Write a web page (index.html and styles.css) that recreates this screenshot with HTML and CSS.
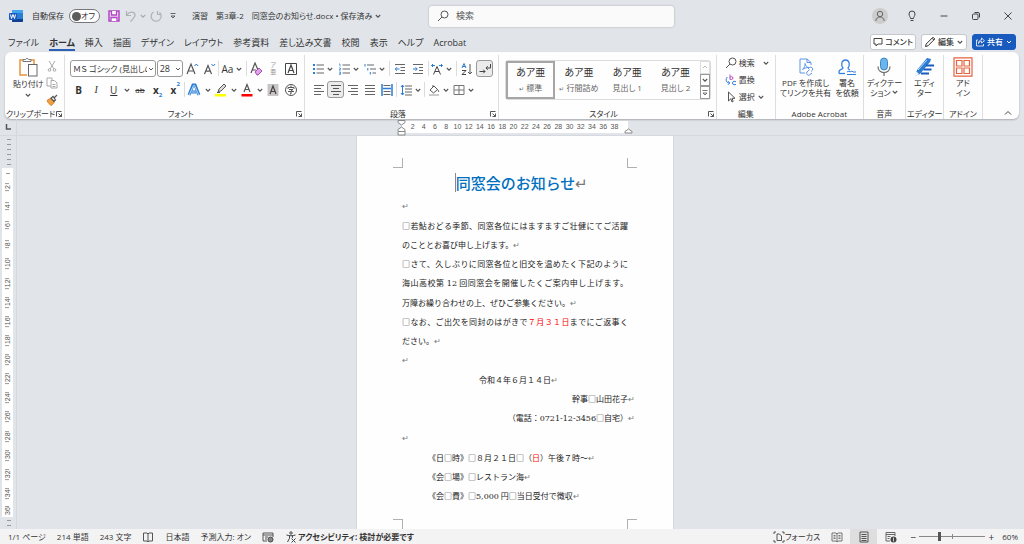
FILE: index.html
```html
<!DOCTYPE html>
<html lang="ja">
<head>
    <meta charset="UTF-8">
    <meta name="viewport" content="width=device-width, initial-scale=1.0">
    <title>演習 第3章-2 同窓会のお知らせ.docx</title>
    <link rel="stylesheet" href="styles.css">
</head>
<body>
    <!-- shared symbols -->
    <svg class="defs" width="0" height="0" aria-hidden="true">
        <symbol id="chev" viewBox="0 0 8 8"><path d="M1.8 3 4 5.2 6.200 3" fill="none" stroke="#555" stroke-width="1.100"/></symbol>
        <symbol id="launch" viewBox="0 0 8 8"><path d="M1.500 6.500v-5h5M3.500 3.500l3 3M6.500 3.500v3h-3" fill="none" stroke="#555"/></symbol>
        <symbol id="lens" viewBox="0 0 12 12"><g fill="none" stroke="#555"><circle cx="7.500" cy="4.500" r="3.500"/><path d="M5 7 1 11"/></g></symbol>
    </svg>

    <header class="titlebar">
        <div class="title-left">
            <svg class="ico app-icon" viewBox="0 0 14 14"><rect x="3" y="1" width="11" height="12" rx="1" fill="#2b7cd3"/><path d="M3 2a1 1 0 0 1 1-1h9a1 1 0 0 1 1 1v2H3z" fill="#41a5ee"/><path d="M3 10h11v2a1 1 0 0 1-1 1H4a1 1 0 0 1-1-1z" fill="#103f91"/><rect y="4" width="8" height="7" rx="1" fill="#185abd"/><path d="m1.500 5.500 1 4 1.500-4 1.500 4 1-4" fill="none" stroke="#fff"/></svg>
            <label class="autosave">自動保存
                <span class="switch"><input type="checkbox"><span class="switch-text">オフ</span></span>
            </label>
            <button class="tool" aria-label="上書き保存"><svg class="ico" viewBox="0 0 12 12"><path d="M1 1h10v10H1z" fill="#f3d9f5" stroke="#b146c2" stroke-width="1.500"/><path d="M3.500 1v4h5V1M3 11V7.500h6V11" fill="#fff" stroke="#b146c2" stroke-width="1.300"/></svg></button>
            <button class="tool" aria-label="元に戻す"><svg class="ico" viewBox="0 0 12 12"><path d="M1.500 1v4.500H6M1.800 5.200C4 1.500 9 1 10 4.500c.6 2.500-2 4-4.500 7" fill="none" stroke="#aeb1b6" stroke-width="1.200"/></svg></button>
            <svg class="chev faint"><use href="#chev"/></svg>
            <button class="tool" aria-label="やり直し"><svg class="ico" viewBox="0 0 12 12"><path d="M7.500 1v3.500H11M3.500 2A5 5 0 1 0 9.500 2.500" fill="none" stroke="#aeb1b6" stroke-width="1.200"/></svg></button>
            <button class="tool" aria-label="ツールバーの設定"><svg class="ico" viewBox="0 0 12 12"><path d="M3.500 3.500h5M4 6h4L6 8z" fill="none" stroke="#555" stroke-width=".9"/></svg></button>
            <span class="doc-name">演習　第3章-2　同窓会のお知らせ.docx • 保存済み</span>
            <svg class="chev"><use href="#chev"/></svg>
        </div>
        <label class="search">
            <svg class="ico"><use href="#lens"/></svg>
            <input type="search" placeholder="検索" aria-label="検索">
        </label>
        <div class="title-right">
            <button aria-label="アカウント"><svg class="avatar" viewBox="0 0 16 16"><circle cx="8" cy="8" r="8" fill="#cdcdcd"/><g fill="none" stroke="#666"><circle cx="8" cy="6" r="2.700"/><path d="M3.800 13c.4-5.400 8-5.400 8.400 0"/></g></svg></button>
            <button aria-label="ヒント"><svg class="ico" viewBox="0 0 12 12"><g fill="none" stroke="#444"><path d="M4.500 8.500C4.500 7 3 6 3 4a3 3 0 0 1 6 0c0 2-1.500 3-1.500 4.500zM4.500 10.500h3"/></g></svg></button>
            <button aria-label="最小化"><svg class="ico" viewBox="0 0 12 12"><path d="M2.500 6h7" stroke="#444"/></svg></button>
            <button aria-label="元のサイズに戻す"><svg class="ico" viewBox="0 0 12 12"><g fill="none" stroke="#444"><rect x="2.500" y="4" width="5.500" height="5.500" rx="1"/><path d="M4.500 2.500H8A1.500 1.500 0 0 1 9.500 4v3.500"/></g></svg></button>
            <button aria-label="閉じる"><svg class="ico" viewBox="0 0 12 12"><path d="m2.500 2.500 7 7m0-7-7 7" stroke="#444"/></svg></button>
        </div>
    </header>

    <nav class="tabs">
        <a href="#">ファイル</a>
        <a href="#" class="active">ホーム</a>
        <a href="#">挿入</a>
        <a href="#">描画</a>
        <a href="#">デザイン</a>
        <a href="#">レイアウト</a>
        <a href="#">参考資料</a>
        <a href="#">差し込み文書</a>
        <a href="#">校閲</a>
        <a href="#">表示</a>
        <a href="#">ヘルプ</a>
        <a href="#">Acrobat</a>
        <div class="tab-actions">
            <button class="action"><svg class="ico-s" viewBox="0 0 10 10"><path d="M1 1.500h8v5.500H5L3 9V7H1z" fill="none" stroke="#444"/></svg>コメント</button>
            <button class="action"><svg class="ico" viewBox="0 0 12 12"><path d="M1.500 10.500 2.200 8 9 1.200l1.800 1.800L4 9.800zM8 2.200 9.800 4" fill="none" stroke="#333"/></svg>編集<svg class="chev"><use href="#chev"/></svg></button>
            <button class="action share"><svg class="ico-s" viewBox="0 0 10 10"><path d="M3 3H1.500v6h7V7M3.500 6.500C3.500 4 5 3 6.500 3V1L9.500 3.800 6.500 6V4.500C5 4.500 4 5 3.500 6.500z" fill="none" stroke="#fff" stroke-width=".8"/></svg>共有<svg class="chev" viewBox="0 0 8 8"><path d="M2 3 4 5l2-2" fill="none" stroke="#fff"/></svg></button>
        </div>
    </nav>

    <section class="ribbon">
        <!-- clipboard -->
        <div class="group">
            <div class="group-body clipboard">
                <button class="big">
                    <svg class="ico-l" viewBox="0 0 20 20"><path d="M6 3H2v15h7" fill="none" stroke="#e8943a" stroke-width="1.500"/><path d="M12 3h4v4" fill="none" stroke="#e8943a" stroke-width="1.500"/><path d="M5 4.500V2.500h2.500a1.600 1.600 0 0 1 3 0H13v2z" fill="#fff" stroke="#777"/><rect x="10.500" y="7.500" width="8.500" height="11.500" fill="#fff" stroke="#666"/></svg>
                    <span>貼り付け</span>
                    <svg class="chev"><use href="#chev"/></svg>
                </button>
                <div class="stack">
                    <button class="tool" aria-label="切り取り"><svg class="ico" viewBox="0 0 12 12"><g fill="none" stroke="#aaa"><path d="M3 1l5 8M9 1 4 9"/><circle cx="3.500" cy="10" r="1.300"/><circle cx="8.500" cy="10" r="1.300"/></g></svg></button>
                    <button class="tool" aria-label="コピー"><svg class="ico" viewBox="0 0 12 12"><g fill="#fff" stroke="#aaa"><path d="M1 1h5v8H1z"/><path d="M5 3.500h3.500L11 6v5H5zM6.500 7.500h3M6.500 9.500h3"/></g></svg></button>
                    <button class="tool" aria-label="書式のコピー"><svg class="ico" viewBox="0 0 12 12"><path d="M1 6.500 5 4l3.500 4L5.500 11.500C4 11 2 9 1 6.500z" fill="#f0a040" stroke="#d9822b"/><path d="M5 4.200 7 2.500 9.500 6 8 7.500zM8 4l3-3" fill="#fff" stroke="#555" stroke-width="1.200"/></svg></button>
                </div>
            </div>
            <div class="group-label"><span>クリップボード</span><svg class="launch"><use href="#launch"/></svg></div>
        </div>

        <!-- font -->
        <div class="group">
            <div class="group-body rows">
                <div class="row spread">
                    <select class="combo font-name" aria-label="フォント"><option>ＭＳ ゴシック (見出しの</option></select>
                    <select class="combo font-size" aria-label="フォント サイズ"><option>28</option></select>
                    <button class="tool" aria-label="フォントの拡大"><svg class="ico-m" viewBox="0 0 14 14"><path d="m2 12 4-10 4 10M3.500 9h5" fill="none" stroke="#555" stroke-width="1.200"/><path d="m9.500 4 1.800-2 1.800 2" fill="none" stroke="#2b7cd3"/></svg></button>
                    <button class="tool" aria-label="フォントの縮小"><svg class="ico-m" viewBox="0 0 14 14"><path d="M2.500 12 6 3.500 9.500 12M4 9.200h4" fill="none" stroke="#555" stroke-width="1.200"/><path d="m9.500 2 1.800 2 1.800-2" fill="none" stroke="#2b7cd3"/></svg></button>
                    <i class="sep"></i>
                    <button class="tool split aa">Aa<svg class="chev"><use href="#chev"/></svg></button>
                    <i class="sep"></i>
                    <button class="tool" aria-label="書式のクリア"><svg class="ico-m" viewBox="0 0 14 14"><path d="M2 11 6 1l3 7M3.500 8H7" fill="none" stroke="#555" stroke-width="1.200"/><path d="m6 10 4-4 3 3-4 4H8z" fill="#d9a6e2" stroke="#b146c2"/></svg></button>
                    <button class="tool ruby" aria-label="ルビ"><span>ア</span><span>亜</span></button>
                    <button class="tool" aria-label="囲み線"><svg class="ico-m" viewBox="0 0 14 14"><path d="M1.500 1.500h11v11h-11z" fill="none" stroke="#444"/><path d="m4 11 3-8 3 8M5 8.500h4" fill="none" stroke="#444" stroke-width="1.200"/></svg></button>
                </div>
                <div class="row spread">
                    <button class="tool bold">B</button>
                    <button class="tool italic">I</button>
                    <button class="tool underline">U</button>
                    <svg class="chev"><use href="#chev"/></svg>
                    <button class="tool strike">ab</button>
                    <button class="tool bold" aria-label="下付き">x<sub>2</sub></button>
                    <button class="tool bold" aria-label="上付き">x<sup>2</sup></button>
                    <i class="sep"></i>
                    <button class="tool" aria-label="文字の効果"><svg class="ico-m" viewBox="0 0 14 14"><path d="M2 12 6 2h2l4 10M4.500 9h5" fill="none" stroke="#2b7cd3" stroke-width="3"/><path d="M2.200 12 6.500 2.500h1L11.800 12M4.500 9h5" fill="none" stroke="#b9dcf7" stroke-width="1"/></svg></button>
                    <svg class="chev"><use href="#chev"/></svg>
                    <button class="tool" aria-label="蛍光ペン"><svg class="ico-m" viewBox="0 0 14 14"><path d="m4 8.500 1-2.500 5-5 2 2-5 5zM3 9.500h3" fill="#ddd" stroke="#555"/><path d="M1 11h11v2.500H1z" fill="#ff0"/></svg></button>
                    <svg class="chev"><use href="#chev"/></svg>
                    <button class="tool" aria-label="フォントの色"><svg class="ico-m" viewBox="0 0 14 14"><path d="m4 9 3-7.500L10 9M5 6.500h4" fill="none" stroke="#555" stroke-width="1.200"/><path d="M1.500 11h11v2.500h-11z" fill="#f00"/></svg></button>
                    <svg class="chev"><use href="#chev"/></svg>
                    <button class="tool" aria-label="文字の網かけ"><svg class="ico-m" viewBox="0 0 14 14"><path d="M1.500 1h11v12h-11z" fill="#c8c6c4"/><path d="m4 11 3-8 3 8M5 8.500h4" fill="none" stroke="#444" stroke-width="1.200"/></svg></button>
                    <button class="tool" aria-label="囲い文字"><svg class="ico-m" viewBox="0 0 14 14"><g fill="none" stroke="#555"><circle cx="7" cy="7" r="5.500"/><path d="M7 2.500V4M4 6V4.500h6V6M5 6.500h4L7 8M4 8.500h6M7 8v3H6"/></g></svg></button>
                </div>
            </div>
            <div class="group-label"><span>フォント</span><svg class="launch"><use href="#launch"/></svg></div>
        </div>

        <!-- paragraph -->
        <div class="group">
            <div class="group-body rows">
                <div class="row spread">
                    <button class="tool split" aria-label="箇条書き"><svg class="ico" viewBox="0 0 12 12"><path d="M4.500 2H12M4.500 6H12M4.500 10H12" stroke="#666"/><path d="M1 2h2M1 6h2M1 10h2" stroke="#2b7cd3" stroke-width="2"/></svg><svg class="chev"><use href="#chev"/></svg></button>
                    <button class="tool split" aria-label="段落番号"><svg class="ico" viewBox="0 0 12 12"><path d="M4.500 2H12M4.500 6H12M4.500 10H12" stroke="#666"/><path d="M1 1h1v2.500M1 5h1.500v1L1 7h2M1 9h1.500v2.500H1M1 10.200h1.500" stroke="#2b7cd3" stroke-width=".7" fill="none"/></svg><svg class="chev"><use href="#chev"/></svg></button>
                    <button class="tool split" aria-label="アウトライン"><svg class="ico" viewBox="0 0 12 12"><path d="M3 2h7M6 6h6M8.500 10H12" stroke="#666"/><path d="M1 1v2.500M3.800 5v2.500M6.300 9v2.500" stroke="#2b7cd3"/></svg><svg class="chev"><use href="#chev"/></svg></button>
                    <i class="sep"></i>
                    <button class="tool" aria-label="インデントを減らす"><svg class="ico" viewBox="0 0 12 12"><path d="M1 1.500h10M6.500 4.500H11M6.500 7.500H11M1 10.500h10" stroke="#666"/><path d="M5.500 6h-4M3 4.200 1.200 6 3 7.800" stroke="#2b7cd3" fill="none"/></svg></button>
                    <button class="tool" aria-label="インデントを増やす"><svg class="ico" viewBox="0 0 12 12"><path d="M1 1.500h10M7 4.500h4M7 7.500h4M1 10.500h10" stroke="#666"/><path d="M1 6h4M3.500 4.200 5.300 6 3.500 7.800" stroke="#2b7cd3" fill="none"/></svg></button>
                    <i class="sep"></i>
                    <button class="tool split" aria-label="拡張書式"><svg class="ico" viewBox="0 0 12 12"><path d="m2.500 11.500 3.500-8 3.500 8M4 8.500h4" fill="none" stroke="#444"/><path d="M.5 2.500H4M2 1 .5 2.500 2 4M8 2.500h3.500M10 1l1.500 1.500L10 4" fill="none" stroke="#2b7cd3"/></svg><svg class="chev"><use href="#chev"/></svg></button>
                    <i class="sep"></i>
                    <button class="tool" aria-label="並べ替え"><svg class="ico" viewBox="0 0 12 12"><path d="m1 5 2-4.500L5 5M1.800 3.500h2.400" fill="none" stroke="#2b7cd3"/><path d="M1 7.500h4l-4 4h4" fill="none" stroke="#444"/><path d="M9 1v10M7 9l2 2 2-2" fill="none" stroke="#555"/></svg></button>
                    <button class="tool on" aria-label="編集記号の表示"><svg class="ico" viewBox="0 0 12 12"><path d="M11.500 1v4H7M8.700 3.200 7 5l1.700 1.800M.5 8.500H6M4.300 6.700 6 8.500 4.300 10.300" fill="none" stroke="#444"/></svg></button>
                </div>
                <div class="row">
                    <button class="tool" aria-label="左揃え"><svg class="ico" viewBox="0 0 12 12"><path d="M1 1.500h10M1 4.500h7M1 7.500h10M1 10.500h7" stroke="#666"/></svg></button>
                    <button class="tool on" aria-label="中央揃え"><svg class="ico" viewBox="0 0 12 12"><path d="M1 1.500h10M3 4.500h6M1 7.500h10M3 10.500h6" stroke="#555"/></svg></button>
                    <button class="tool" aria-label="右揃え"><svg class="ico" viewBox="0 0 12 12"><path d="M1 1.500h10M4 4.500h7M1 7.500h10M4 10.500h7" stroke="#666"/></svg></button>
                    <button class="tool" aria-label="両端揃え"><svg class="ico" viewBox="0 0 12 12"><path d="M1 1.500h10M1 4.500h10M1 7.500h10M1 10.500h10" stroke="#666"/></svg></button>
                    <button class="tool" aria-label="均等割り付け"><svg class="ico" viewBox="0 0 12 12"><path d="M1 0v12M11 0v12M2 4.500h8" stroke="#2b7cd3" stroke-width="1.500"/><path d="M2.500 1.500h7M2.500 7.500h7M2.500 10.500h7" stroke="#666"/></svg></button>
                    <i class="sep"></i>
                    <button class="tool split" aria-label="行間"><svg class="ico" viewBox="0 0 12 12"><path d="M5 2h7M5 5h7M5 8h7M5 11h7" stroke="#666"/><path d="M2.500 1v10M1 3l1.500-2L4 3M1 9l1.500 2L4 9" fill="none" stroke="#2b7cd3"/></svg><svg class="chev"><use href="#chev"/></svg></button>
                    <i class="sep"></i>
                    <button class="tool split" aria-label="塗りつぶし"><svg class="ico" viewBox="0 0 12 12"><path d="m2 6 4-4 3.500 3.500L5.500 9zM5 3V1M9.500 5.500c1 1 1.500 2 .8 2.500" fill="none" stroke="#555"/><path d="M1 10h10v2H1z" fill="#ccc"/></svg><svg class="chev"><use href="#chev"/></svg></button>
                    <button class="tool split" aria-label="罫線"><svg class="ico" viewBox="0 0 12 12"><path d="M1 1.500h10v9H1zM6 1.500v9M1 6h10" fill="none" stroke="#777"/></svg><svg class="chev"><use href="#chev"/></svg></button>
                </div>
            </div>
            <div class="group-label"><span>段落</span><svg class="launch"><use href="#launch"/></svg></div>
        </div>

        <!-- styles -->
        <div class="group">
            <div class="group-body gallery-wrap">
                <div class="gallery">
                    <button class="style-card selected"><b>あア亜</b><span><small>↵</small> 標準</span></button>
                    <button class="style-card"><b>あア亜</b><span><small>↵</small> 行間詰め</span></button>
                    <button class="style-card"><b>あア亜</b><span>見出し 1</span></button>
                    <button class="style-card"><b>あア亜</b><span>見出し 2</span></button>
                    <div class="gallery-nav">
                        <button aria-label="上へ" disabled><svg class="chev" viewBox="0 0 8 8"><path d="m2 5 2-2 2 2" fill="none" stroke="#bbb"/></svg></button>
                        <button aria-label="下へ"><svg class="chev"><use href="#chev"/></svg></button>
                        <button aria-label="その他"><svg class="chev" viewBox="0 0 8 8"><path d="M1.500 1.500h5M2 4h4L4 6z" fill="none" stroke="#555" stroke-width=".8"/></svg></button>
                    </div>
                </div>
            </div>
            <div class="group-label"><span>スタイル</span><svg class="launch"><use href="#launch"/></svg></div>
        </div>

        <!-- editing -->
        <div class="group">
            <div class="group-body editing">
                <button class="line"><svg class="ico"><use href="#lens"/></svg>検索<svg class="chev far"><use href="#chev"/></svg></button>
                <button class="line"><svg class="ico" viewBox="0 0 12 12"><path d="M5 .5v5M5 3.500c.5-1.200 3-1.200 3 .5S5.500 6 5 5" fill="none" stroke="#b146c2"/><path d="M2.500 3C0 5 1 9 4.500 9M3 7.200 4.800 9 3 10.800M11 7.800c-1-1-3.500-.8-3.500 1.200s2.500 2.200 3.500 1.200" fill="none" stroke="#2b7cd3"/></svg>置換</button>
                <button class="line"><svg class="ico" viewBox="0 0 12 12"><path d="M3.500 1v9l2.300-2.200L7 11l1.200-.6L7 7.300h3z" fill="none" stroke="#555"/></svg>選択<svg class="chev"><use href="#chev"/></svg></button>
            </div>
            <div class="group-label"><span>編集</span></div>
        </div>

        <!-- acrobat -->
        <div class="group">
            <div class="group-body bigs">
                <button class="big">
                    <svg class="ico-l" viewBox="0 0 20 20"><g fill="none" stroke="#5b95ea"><path d="M15 8V5.500L11 2H4v14h5M11 2v3.500h4M6.500 12.500c2-2 3-4 2.500-6 1 3 2 4 4 4-2.500 0-4.500.5-6.500 2z"/><path d="m11 15 2.500-2.500M12 12l1.500-1.500a2 2 0 0 1 2.800 2.800L15 14.500M12.500 13.500 11 15a2 2 0 0 0 2.800 2.800L16 16"/></g></svg>
                    <span>PDF を作成し<br>てリンクを共有</span>
                </button>
                <button class="big">
                    <svg class="ico-l" viewBox="0 0 20 20"><g fill="none" stroke="#2f7de1" stroke-width="1.300"><path d="M2 16.500v-2c0-2 4-2 4-3.500C4 9 4 3 8.500 3S13 9 11 11c0 1 1 1.500 2 2"/><path d="M2 16.500h6"/><path d="M10 17.500h9M10 15l2-1 1 1 2-1 1 1h3" stroke-width="1"/></g></svg>
                    <span>署名<br>を依頼</span>
                </button>
            </div>
            <div class="group-label"><span>Adobe Acrobat</span></div>
        </div>

        <!-- voice -->
        <div class="group">
            <div class="group-body bigs">
                <button class="big">
                    <svg class="ico-l" viewBox="0 0 20 20"><rect x="6.500" y="1" width="7" height="12" rx="3.500" fill="#6cb5ea" stroke="#3a88c5"/><path d="M4 9.500c0 8 12 8 12 0M10 15.500V19" fill="none" stroke="#666" stroke-width="1.200"/></svg>
                    <span>ディクテー<br>ション<svg class="chev"><use href="#chev"/></svg></span>
                </button>
            </div>
            <div class="group-label"><span>音声</span></div>
        </div>

        <!-- editor -->
        <div class="group">
            <div class="group-body bigs">
                <button class="big">
                    <svg class="ico-l" viewBox="0 0 20 20"><path d="M1 19 3 13 13 1l4 1-1 3L6 17z" fill="#2b7cd3"/><path d="M1 19l1.500-4 2 2zM4 13l9-10" fill="#fff" stroke="#fff" stroke-width=".7"/><path d="M12 8.500h8M9.500 12.500h8M7 16.500h8" stroke="#185abd" stroke-width="2"/></svg>
                    <span>エディ<br>ター</span>
                </button>
            </div>
            <div class="group-label"><span>エディター</span></div>
        </div>

        <!-- add-ins -->
        <div class="group">
            <div class="group-body bigs">
                <button class="big">
                    <svg class="ico-l" viewBox="0 0 20 20"><g fill="none" stroke="#e3643f" stroke-width="1.200"><path d="M1 .8h18v18.400H1z"/><path d="M3.500 3.500h5.500v5.500H3.500zM11 3.500h5.500v5.500H11zM3.500 11h5.500v5.500H3.500zM11 11h5.500v5.500H11z"/></g></svg>
                    <span>アド<br>イン</span>
                </button>
            </div>
            <div class="group-label"><span>アドイン</span></div>
        </div>

        <div class="collapse">
            <button class="tool" aria-label="リボンを折りたたむ"><svg class="ico-s" viewBox="0 0 10 10"><path d="m2 6.500 3-3 3 3" fill="none" stroke="#444"/></svg></button>
        </div>
    </section>

    <div class="ruler-row">
        <div class="tab-stop"><svg class="ico-s" viewBox="0 0 10 10"><path d="M3.500 2v5H8" fill="none" stroke="#555" stroke-width="1.500"/></svg></div>
        <div class="hruler">
            <div class="hscale">
                <svg class="marker left" viewBox="0 0 9 16"><path d="M1 .5h7v2L4.500 5 1 2.500zM1 11V9.500L4.500 7 8 9.500V15H1v-3.500h7" fill="#fff" stroke="#888"/></svg>
                <span>2</span><span>4</span><span>6</span><span>8</span><span>10</span><span>12</span><span>14</span><span>16</span><span>18</span><span>20</span><span>22</span><span>24</span><span>26</span><span>28</span><span>30</span><span>32</span><span>34</span><span>36</span><span>38</span>
                <svg class="marker right" viewBox="0 0 9 16"><path d="M1 13v-1.500L4.500 9 8 11.500V13z" fill="#fff" stroke="#888"/></svg>
            </div>
        </div>
    </div>

    <main class="workspace">
        <div class="vruler">
            <div class="vticks top"></div>
            <div class="vscale">
                <span>2</span><span>4</span><span>6</span><span>8</span><span>10</span><span>12</span><span>14</span><span>16</span><span>18</span><span>20</span><span>22</span><span>24</span><span>26</span><span>28</span><span>30</span><span>32</span><span>34</span><span>36</span>
            </div>
            <div class="vticks bottom"></div>
        </div>
        <div class="canvas">
            <article class="page">
                <div class="crop top"><i></i><i></i></div>
                <div class="text">
                    <h1><span class="caret"></span>同窓会のお知らせ<i class="ret">↵</i></h1>
                    <p class="blank"><i class="ret">↵</i></p>
                    <p><span class="full"><i class="sp">□</i>若鮎おどる季節、同窓各位にはますますご壮健にてご活躍</span>
                        のこととお喜び申し上げます。<i class="ret">↵</i></p>
                    <p><span class="full"><i class="sp">□</i>さて、久しぶりに同窓各位と旧交を温めたく下記のように</span>
                        <span class="full">海山高校第 <span class="num">12</span> 回同窓会を開催したくご案内申し上げます。</span>
                        万障お繰り合わせの上、ぜひご参集ください。<i class="ret">↵</i></p>
                    <p><span class="full"><i class="sp">□</i>なお、ご出欠を同封のはがきで<em>７月３１日</em>までにご返事く</span>
                        ださい。<i class="ret">↵</i></p>
                    <p class="blank"><i class="ret">↵</i></p>
                    <p class="center">令和４年６月１４日<i class="ret">↵</i></p>
                    <p class="right">幹事<i class="sp">□</i>山田花子<i class="ret">↵</i></p>
                    <p class="right">（電話：<span class="num">0721-12-3456</span><i class="sp">□</i>自宅）<i class="ret">↵</i></p>
                    <p class="blank"><i class="ret">↵</i></p>
                    <p class="indent">《日<i class="sp">□</i>時》<i class="sp">□</i>８月２１日<i class="sp">□</i>（<em>日</em>）午後７時～<i class="ret">↵</i></p>
                    <p class="indent">《会<i class="sp">□</i>場》<i class="sp">□</i>レストラン海<i class="ret">↵</i></p>
                    <p class="indent">《会<i class="sp">□</i>費》<i class="sp">□</i><span class="num">5,000</span> 円<i class="sp">□</i>当日受付で徴収<i class="ret">↵</i></p>
                </div>
                <div class="crop bottom"><i></i><i></i></div>
            </article>
        </div>
    </main>

    <footer class="status">
        <span>1/1 ページ</span>
        <span>214 単語</span>
        <span>243 文字</span>
        <svg class="ico" viewBox="0 0 12 12"><path d="M1.500 2H5l1 1 1-1h3.500v8H7l-1 1-1-1H1.500zM6 3v8" fill="none" stroke="#555"/></svg>
        <span>日本語</span>
        <span>予測入力: オン</span>
        <svg class="ico" viewBox="0 0 12 12"><path d="M1 10V2h10v4M1 4h10M3 6h3M3 8h2M1 10h4" fill="none" stroke="#555"/><circle cx="8.500" cy="8.500" r="2.500" fill="#888" stroke="#444"/></svg>
        <span class="access"><svg class="ico" viewBox="0 0 12 12"><g fill="none" stroke="#444"><circle cx="6" cy="2" r="1.200"/><path d="M1.500 4c3 1 6 1 9 0M4.500 4.800v2.500L2.500 11M7.500 4.800v2M6.500 7.500l4 4m0-4-4 4"/></g></svg>アクセシビリティ: 検討が必要です</span>
        <div class="status-right">
            <button class="focus"><svg class="ico" viewBox="0 0 12 12"><path d="M3 1H1v2M9 1h2v2M3 11H1V9M9 11h2V9M4 3h2.500L8.500 5v4.500H4z" fill="none" stroke="#555"/></svg>フォーカス</button>
            <button class="view" aria-label="閲覧モード"><svg class="ico" viewBox="0 0 12 12"><path d="M1 2h4l1 1 1-1h4v8H7l-1 1-1-1H1zM6 3v8M2.500 4.500h2M2.500 6h2M2.500 7.500h2M7.500 4.500h2M7.500 6h2M7.500 7.500h2" fill="none" stroke="#666" stroke-width=".9"/></svg></button>
            <button class="view current" aria-label="印刷レイアウト"><svg class="ico" viewBox="0 0 12 12"><path d="M2 1h8v10H2zM3.500 3.500h5M3.500 5.500h5M3.500 7.500h5M3.500 9.500h5" fill="none" stroke="#555"/></svg></button>
            <button class="view" aria-label="Web レイアウト"><svg class="ico" viewBox="0 0 12 12"><path d="M1 10V1.500h9V5M1 3.500h9M2.500 5.500h3M2.500 7.500h2M1 10h4" fill="none" stroke="#666"/><circle cx="8.500" cy="8.500" r="3" fill="#444"/><path d="M8.500 6.500v4" stroke="#ccc"/></svg></button>
            <div class="zoom">
                <button aria-label="縮小">−</button>
                <input type="range" min="0" max="100" value="30" aria-label="ズーム">
                <button aria-label="拡大">+</button>
            </div>
            <span class="percent">60%</span>
        </div>
    </footer>
</body>
</html>
```

FILE: styles.css
```css
* {
    box-sizing: border-box;
}
body {
    display: flex;
    flex-direction: column;
    height: 100vh;
    margin: 0;
    overflow: hidden;
    background-color: #e1e5ea;
    color: #333;
    font-family: "Open Sans", "Noto Sans CJK JP", sans-serif;
    font-size: 8px;
    line-height: 10px;
    font-feature-settings: "palt";
}
button, input, select {
    margin: 0;
    padding: 0;
    border: none;
    background: none;
    color: inherit;
    font: inherit;
    font-feature-settings: inherit;
}
button {
    display: flex;
    align-items: center;
    justify-content: center;
    white-space: nowrap;
}
svg {
    display: block;
    flex: none;
}
.defs {
    position: absolute;
}
.ico {
    width: 12px;
    height: 12px;
}
.ico-s {
    width: 10px;
    height: 10px;
}
.ico-m {
    width: 14px;
    height: 14px;
}
.ico-l {
    width: 20px;
    height: 20px;
}
.chev, .launch {
    width: 8px;
    height: 8px;
}
.faint {
    opacity: 0.4;
}

/* title bar */
.titlebar {
    display: grid;
    grid-template-columns: 429fr 245fr 350fr;
    align-items: center;
    height: 32px;
}
.title-left {
    display: flex;
    align-items: center;
    padding-left: 9px;
    white-space: nowrap;
}
.app-icon {
    width: 14px;
    height: 14px;
    margin-right: 9px;
}
.autosave {
    display: flex;
    align-items: center;
    gap: 5px;
    margin-right: 5px;
}
.switch {
    display: flex;
    flex: none;
    align-items: center;
    justify-content: space-between;
    width: 31px;
    height: 14px;
    padding: 0 4px 0 2px;
    border: 1px solid #777;
    border-radius: 7px;
    background-color: #fff;
}
.switch input {
    appearance: none;
    flex: none;
    width: 9px;
    height: 9px;
    border-radius: 50%;
    background-color: #5c5c5c;
}
.doc-name {
    margin-left: 11px;
    margin-right: 2px;
}
.search {
    display: flex;
    align-items: center;
    gap: 7px;
    height: 21px;
    padding: 0 8px;
    border-radius: 3px;
    background-color: #fafafa;
    box-shadow: 0 0 2px rgba(0, 0, 0, 0.3);
}
.search input {
    flex: 1;
    min-width: 0;
    font-size: 9px;
    outline: none;
}
.search input::placeholder {
    color: #555;
}
.title-right {
    display: flex;
    justify-content: flex-end;
}
.title-right button {
    width: 32px;
    height: 32px;
}
.avatar {
    width: 16px;
    height: 16px;
}

/* tabs */
.tabs {
    display: flex;
    flex: none;
    align-items: center;
    gap: 10px;
    height: 20px;
    padding: 0 8px;
    font-size: 9px;
    white-space: nowrap;
}
.tabs a {
    height: 18px;
    padding-top: 3px;
    border-bottom: 2px solid transparent;
    color: #333;
    line-height: 13px;
    text-decoration: none;
}
.tabs .active {
    border-color: #2b5fb8;
    font-weight: bold;
}
.tab-actions {
    display: flex;
    gap: 5px;
    margin-left: auto;
}
.action {
    gap: 2px;
    height: 16px;
    padding: 0 2px;
    border: 1px solid #c4c7cb;
    border-radius: 3px;
    background-color: #fff;
    font-size: 8px;
    font-weight: 500;
}
.share {
    border-color: #185abd;
    background-color: #185abd;
    color: #fff;
}

/* ribbon */
.ribbon {
    display: grid;
    flex: none;
    grid-template-columns:
        minmax(0, 60fr) minmax(0, 240fr) minmax(0, 194fr) minmax(0, 217fr) minmax(0, 59fr)
        minmax(0, 88fr) minmax(0, 42fr) minmax(0, 38fr) minmax(0, 39fr) minmax(0, 36fr);
    height: 67px;
    margin: 0 5px;
    border-radius: 6px;
    background-color: #fefefe;
    box-shadow: 0 1px 2px rgba(0, 0, 0, 0.25);
}
.group {
    display: flex;
    flex-direction: column;
    margin: 3px 0 2px;
    border-right: 1px solid #dedede;
}
.group-body {
    flex: 1;
    padding: 2px 5px 0;
}
.group-label {
    display: flex;
    align-items: center;
    height: 11px;
    padding: 0 1px;
    white-space: nowrap;
}
.group-label span {
    display: flex;
    flex: 1;
    justify-content: center;
}
.tool {
    flex: none;
    width: 17px;
    height: 17px;
    border-radius: 3px;
}
.split {
    width: 25px;
    gap: 2px;
}
.on {
    border: 1px solid #999;
    background-color: #ebebeb;
}
.big {
    flex-direction: column;
    justify-content: flex-start;
    gap: 1px;
    line-height: 10px;
}
.big span .chev {
    display: inline-block;
}
.clipboard {
    display: flex;
    justify-content: space-between;
    padding-left: 8px;
    padding-right: 5px;
}
.clipboard .big {
    gap: 2px;
}
.stack .tool {
    width: 14px;
}
.rows {
    display: flex;
    flex-direction: column;
    gap: 4px;
    padding-top: 5px;
}
.row {
    display: flex;
    align-items: center;
}
.spread {
    justify-content: space-between;
}
.sep {
    width: 1px;
    height: 15px;
    margin: 0 1px;
    background-color: #dcdcdc;
}
.spread .sep {
    margin: 0;
}
.combo {
    appearance: none;
    height: 17px;
    padding: 0 8px 0 2px;
    border: 1px solid #999;
    border-radius: 3px;
    background: #fff url("data:image/svg+xml,%3Csvg xmlns='http://www.w3.org/2000/svg' viewBox='0 0 8 8'%3E%3Cpath d='M2 3l2 2 2-2' fill='none' stroke='%23555'/%3E%3C/svg%3E") no-repeat right 0 center / 8px 8px;
    font-size: 8px;
}
.font-name {
    width: 86px;
}
.font-size {
    width: 26px;
    font-size: 9px;
}
.aa {
    font-size: 10px;
}
.ruby {
    flex-direction: column;
    color: #999;
    font-size: 6px;
    line-height: 7px;
}
.bold, .italic, .underline {
    font-size: 10px;
}
.bold {
    font-weight: bold;
}
.bold sub, .bold sup {
    color: #2b7cd3;
    font-size: 6px;
    line-height: 6px;
}
.bold sub {
    align-self: flex-end;
}
.bold sup {
    align-self: flex-start;
}
.italic {
    font-family: "Liberation Serif", serif;
    font-style: italic;
}
.underline {
    text-decoration: underline;
}
.strike {
    text-decoration: line-through;
}
.gallery-wrap {
    padding: 5px 5px 0 6px;
}
.gallery {
    display: grid;
    grid-template-columns: repeat(4, 1fr) 10px;
    height: 40px;
    border: 1px solid #dcdcdc;
    border-radius: 3px;
}
.style-card {
    flex-direction: column;
    gap: 6px;
    color: #666;
}
.style-card b {
    color: #333;
    font-size: 10px;
    font-weight: normal;
}
.style-card small {
    font-size: 6px;
}
.selected {
    border: 2px solid #a6a6a6;
}
.gallery-nav {
    display: grid;
    grid-template-rows: repeat(3, 1fr);
}
.gallery-nav button {
    border: 1px solid #999;
}
.gallery-nav button:disabled {
    border-color: #ddd;
}
.editing {
    display: flex;
    flex-direction: column;
    gap: 5px;
}
.line {
    justify-content: flex-start;
    gap: 2px;
    height: 12px;
    padding-left: 3px;
}
.far {
    margin-left: auto;
}
.bigs {
    display: flex;
    justify-content: space-evenly;
    padding: 2px 0 0;
}
.collapse {
    display: flex;
    align-items: flex-end;
    justify-content: flex-end;
    padding-right: 3px;
}

/* horizontal ruler */
.ruler-row {
    display: grid;
    flex: none;
    grid-template-columns: 17px 1fr 11px;
    height: 17px;
    border-bottom: 1px solid #d5d9de;
}
.tab-stop {
    display: grid;
    place-items: center;
    border-right: 1px solid #d5d9de;
}
.hruler {
    display: flex;
    justify-content: center;
}
.hscale {
    display: grid;
    position: relative;
    grid-template-columns: repeat(19, minmax(0, 1fr));
    width: 226px;
    height: 12px;
    margin-top: 2px;
    padding: 0 8px 0 5px;
    background-color: #fff;
    color: #555;
    font-family: "Liberation Sans", sans-serif;
    font-size: 7px;
    line-height: 12px;
    text-align: center;
}
.hscale span {
    display: flex;
    justify-content: center;
}
.marker {
    position: absolute;
    top: -1px;
    width: 9px;
    height: 16px;
}
.marker.left {
    left: -5px;
}
.marker.right {
    right: -5px;
}

/* document area */
.workspace {
    display: grid;
    flex: 1;
    grid-template-columns: 17px 1fr 11px;
    min-height: 0;
}
.vruler {
    display: flex;
    flex-direction: column;
    padding: 0 3px 0 2px;
    border-right: 1px solid #d5d9de;
}
.vticks {
    width: 4px;
    margin-left: 5px;
    background: repeating-linear-gradient(transparent 0 3px, #999 3px 4px, transparent 4px 5px);
}
.vticks.top {
    height: 32px;
}
.vticks.bottom {
    height: 12px;
}
.vscale {
    display: grid;
    flex: 1;
    grid-template-rows: repeat(17, minmax(0, 1fr)) 14px;
    padding-top: 10px;
    background: linear-gradient(#999, #999) no-repeat center 5px / 4px 1px #fff;
    color: #555;
    font-family: "Liberation Sans", sans-serif;
    font-size: 7px;
    line-height: 9px;
}
.vscale span {
    display: flex;
    align-items: center;
    justify-content: center;
    writing-mode: vertical-rl;
    transform: rotate(180deg);
}
.vscale span::before, .vscale span::after {
    content: "";
    width: 4px;
    height: 1px;
    margin: 1px 0;
    background-color: #999;
}
.vscale span:last-child::before {
    display: none;
}
.canvas {
    display: flex;
    justify-content: center;
    min-height: 0;
    overflow: hidden;
}
.page {
    display: flex;
    flex-direction: column;
    width: 316px;
    padding-top: 22px;
    background-color: #fefefe;
    box-shadow: 0 0 1px rgba(0, 0, 0, 0.3);
    color: #222;
    font-family: "Noto Sans CJK JP", sans-serif;
    font-feature-settings: normal;
}
.crop {
    display: flex;
    justify-content: space-between;
    padding: 0 36px;
}
.crop i {
    width: 10px;
    height: 10px;
    border: 0 solid #b0b0b0;
    border-right-width: 1px;
}
.crop i:last-child {
    border-right-width: 0;
    border-left-width: 1px;
}
.crop.top i {
    border-bottom-width: 1px;
}
.crop.bottom i {
    border-top-width: 1px;
}
.text {
    flex: 1;
    padding: 0 45px;
    line-height: 19px;
}
.text h1 {
    display: flex;
    align-items: center;
    justify-content: center;
    height: 28px;
    margin: 0;
    color: #0070c0;
    font-size: 15px;
    font-weight: 500;
}
.text p {
    margin: 0;
    white-space: nowrap;
}
.text .blank {
    line-height: 20px;
}
.full {
    display: block;
    text-align-last: justify;
    white-space: normal;
}
.center {
    text-align: center;
}
.right {
    text-align: right;
}
.text .indent {
    padding-left: 26px;
}
.text em {
    color: #f00;
    font-style: normal;
}
.num {
    font-family: "DejaVu Serif", serif;
}
.ret, .sp {
    color: #777;
    font-style: normal;
}
.sp {
    color: #222;
}
/* the return mark hangs outside the line */
.ret {
    display: inline-block;
    width: 0;
    font-weight: normal;
}
.caret {
    width: 1px;
    height: 19px;
    background-color: #888;
}

/* status bar */
.status {
    display: flex;
    flex: none;
    align-items: center;
    gap: 11px;
    height: 15px;
    padding: 0 6px 0 8px;
    background-color: #f3f3f3;
    white-space: nowrap;
}
.access {
    display: flex;
    align-items: center;
    gap: 1px;
    font-weight: bold;
}
.status-right {
    display: flex;
    align-items: center;
    margin-left: auto;
}
.focus {
    margin-right: 3px;
}
.view {
    width: 27px;
    height: 15px;
}
.current {
    background-color: #dedede;
}
.zoom {
    display: flex;
    align-items: center;
    margin-left: 3px;
}
.zoom button {
    width: 12px;
    font-size: 10px;
}
.zoom input {
    appearance: none;
    width: 66px;
    height: 9px;
    background:
        linear-gradient(#888, #888) no-repeat center / 100% 1px,
        linear-gradient(#888, #888) no-repeat center / 1px 5px;
}
.zoom input::-webkit-slider-thumb {
    appearance: none;
    width: 3px;
    height: 9px;
    background-color: #555;
}
.percent {
    margin-left: 5px;
}
```
